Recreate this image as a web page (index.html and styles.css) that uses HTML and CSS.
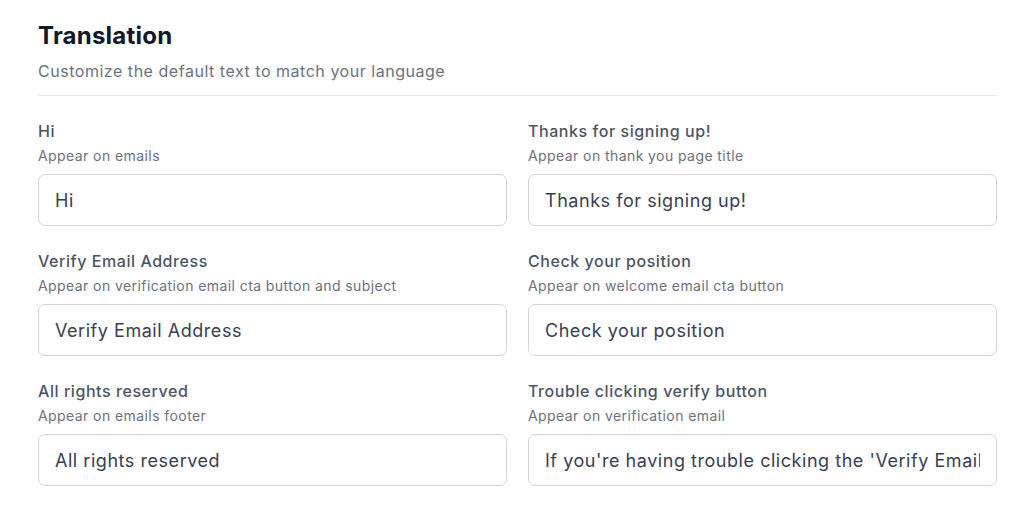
FILE: index.html
```html
<!DOCTYPE html>
<html>
<head>
<meta charset="utf-8">
<link rel="stylesheet" href="styles.css">
</head>
<body>
<div class="page">
  <header class="head">
    <h1 class="title">Translation</h1>
    <p class="subtitle">Customize the default text to match your language</p>
  </header>
  <div class="fields">
    <label class="field">
      <span class="label">Hi</span>
      <span class="desc">Appear on emails</span>
      <input class="input" type="text" value="Hi">
    </label>
    <label class="field">
      <span class="label">Thanks for signing up!</span>
      <span class="desc">Appear on thank you page title</span>
      <input class="input" type="text" value="Thanks for signing up!">
    </label>
    <label class="field">
      <span class="label">Verify Email Address</span>
      <span class="desc">Appear on verification email cta button and subject</span>
      <input class="input" type="text" value="Verify Email Address">
    </label>
    <label class="field">
      <span class="label">Check your position</span>
      <span class="desc">Appear on welcome email cta button</span>
      <input class="input" type="text" value="Check your position">
    </label>
    <label class="field">
      <span class="label">All rights reserved</span>
      <span class="desc">Appear on emails footer</span>
      <input class="input" type="text" value="All rights reserved">
    </label>
    <label class="field">
      <span class="label">Trouble clicking verify button</span>
      <span class="desc">Appear on verification email</span>
      <input class="input" type="text" value="If you're having trouble clicking the 'Verify Email Address' button, copy and paste the URL below into your web browser:">
    </label>
  </div>
</div>
</body>
</html>
```
FILE: styles.css
```css
* { box-sizing: border-box; }
html, body { margin: 0; padding: 0; background: #ffffff; }
body { font-family: Inter, "Noto Sans", sans-serif; }
.page { padding: 20px 24px 0 38px; }
.head { border-bottom: 1px solid #e5e7eb; padding-bottom: 12px; }
.title { margin: 0; font-size: 24px; line-height: 32px; font-weight: 700; color: #111827; letter-spacing: 0.01em; }
.subtitle { margin: 7px 0 0; font-size: 16px; line-height: 24px; color: #6b7280; letter-spacing: 0.033em; }
.fields { display: grid; grid-template-columns: minmax(0, 1fr) minmax(0, 1fr); column-gap: 21px; row-gap: 23px; padding-top: 23px; }
.field { display: flex; flex-direction: column; min-width: 0; }
.label { font-size: 16px; line-height: 24px; color: #4b5563; font-weight: 500; letter-spacing: 0.035em; }
.desc { margin-top: 3px; font-size: 14px; line-height: 20px; color: #6b7280; letter-spacing: 0.03em; }
.input { margin-top: 8px; width: 100%; height: 52px; border: 1px solid #d1d5db; border-radius: 7px; padding: 0 16px; font-family: inherit; font-size: 18px; color: #374151; letter-spacing: 0.03em; background: #ffffff; outline: none; }
```
